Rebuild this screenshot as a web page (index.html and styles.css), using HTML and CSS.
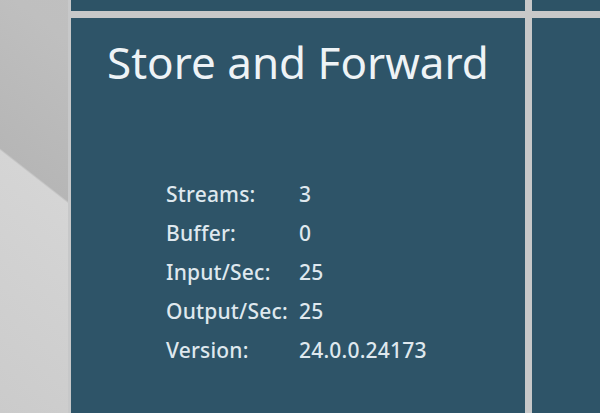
FILE: index.html
```html
<!DOCTYPE html>
<html lang="en">
<head>
<meta charset="utf-8">
<title>Store and Forward</title>
<link rel="stylesheet" href="styles.css">
</head>
<body>
<div class="board">
  <div class="tile tile-top"></div>
  <div class="tile tile-top"></div>
  <section class="tile tile-main">
    <h1 class="title">Store and Forward</h1>
    <dl class="stats">
      <dt>Streams:</dt><dd>3</dd>
      <dt>Buffer:</dt><dd>0</dd>
      <dt>Input/Sec:</dt><dd>25</dd>
      <dt>Output/Sec:</dt><dd>25</dd>
      <dt>Version:</dt><dd>24.0.0.24173</dd>
    </dl>
  </section>
  <div class="tile"></div>
</div>
</body>
</html>
```

FILE: styles.css
```css
html, body {
  margin: 0;
  padding: 0;
  width: 600px;
  height: 413px;
  overflow: hidden;
}

body {
  background: linear-gradient(218deg,
    #c6c6c6 0px,
    #bfbfbf 360px,
    #b6b6b6 486px,
    #d5d5d5 488px,
    #cbcbcb 100%);
  font-family: "Noto Sans", "Open Sans", sans-serif;
}

.board {
  margin-left: 68px;
  padding-left: 3px;
  height: 413px;
  box-sizing: border-box;
  background: #c7c8c9;
  display: grid;
  grid-template-columns: 454px 1fr;
  grid-template-rows: 11px 1fr;
  column-gap: 7px;
  row-gap: 7px;
}

.tile {
  background: #2e5468;
}

.tile-top {
  background: #2d5366;
}

.tile-main {
  padding: 21px 0 0 36px;
  color: #eef3f6;
}

.title {
  margin: 0;
  font-weight: 400;
  font-size: 44px;
  line-height: 46px;
  white-space: nowrap;
}

.stats {
  margin: 90px 0 0 59px;
  display: grid;
  grid-template-columns: 133px auto;
  font-size: 21px;
  font-weight: 500;
  line-height: 39px;
  letter-spacing: 0.2px;
  color: #dfe8ee;
}

.stats dt,
.stats dd {
  margin: 0;
  white-space: nowrap;
}
```
